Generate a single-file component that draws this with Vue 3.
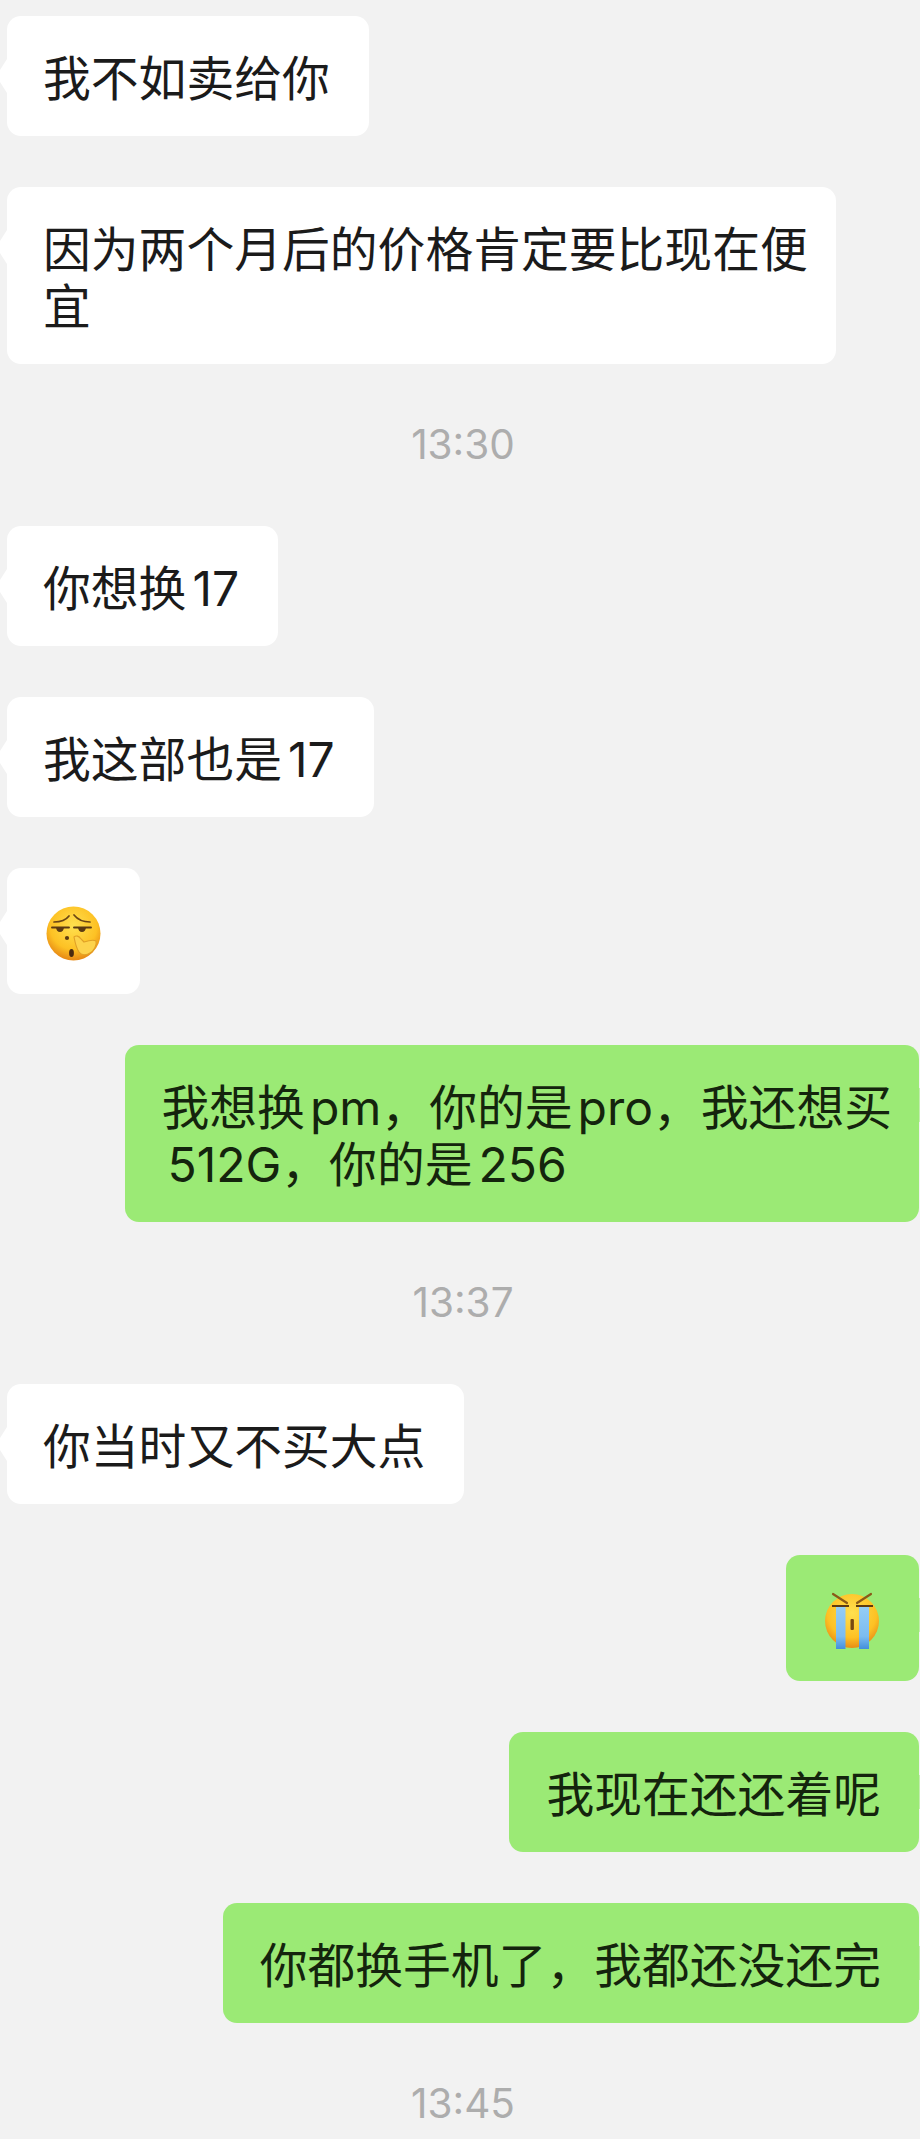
<script setup>
</script>

<template>
  <main class="chat">
    <div class="row"><div class="bubble in">我不如卖给你</div></div>
    <div class="row"><div class="bubble in wrap">因为两个月后的价格肯定要比现在便宜</div></div>
    <div class="time">13:30</div>
    <div class="row"><div class="bubble in">你想换<span class="lat">17</span></div></div>
    <div class="row"><div class="bubble in">我这部也是<span class="lat">17</span></div></div>
    <div class="row">
      <div class="bubble in emoji-bubble">
        <svg class="emoji" viewBox="0 0 56 56" role="img" aria-label="shushing face">
          <defs>
            <radialGradient id="faceA" cx="50%" cy="36%" r="62%">
              <stop offset="0" stop-color="#ffe04f" />
              <stop offset="0.7" stop-color="#fdc124" />
              <stop offset="1" stop-color="#e88c16" />
            </radialGradient>
          </defs>
          <circle cx="27.500" cy="27.500" r="27" fill="url(#faceA)" />
          <path d="M8 16c6 0 12-2 15-6M28 9c4 5 9 7 16 7" fill="none" stroke="#6b4514" stroke-width="1.700" stroke-linecap="round" />
          <path d="M6 21.500h17M28 21.500h17" fill="none" stroke="#5c3a12" stroke-width="1.900" stroke-linecap="round" />
          <path d="M10 21h8c0 3-1.800 5-4 5s-4-2-4-5zM32 21h8c0 3-1.800 5-4 5s-4-2-4-5z" fill="#5c3a12" />
          <circle cx="21" cy="32" r="2.100" fill="#5c3a12" />
          <ellipse cx="25.500" cy="47" rx="2.400" ry="4.100" fill="#4a2a10" />
          <path d="M28 31c2-2 5-1 7 2l3 3c3-1 9-3 12-1 1 4-2 10-6 12-4 3-9 2-11-1-3-4-4-10-5-15z" fill="#fdd34c" stroke="#e0a026" stroke-width="1.100" />
        </svg>
      </div>
    </div>
    <div class="row out"><div class="bubble green long">我想换<span class="lat tight">pm</span>，你的是<span class="lat tight">pro</span>，我还想买<br /><span class="indent"><span class="lat first">512G</span>，你的是<span class="lat">256</span></span></div></div>
    <div class="time">13:37</div>
    <div class="row"><div class="bubble in">你当时又不买大点</div></div>
    <div class="row out">
      <div class="bubble green emoji-bubble">
        <svg class="emoji tall" viewBox="0 0 56 58" role="img" aria-label="loudly crying face">
          <defs>
            <radialGradient id="faceB" cx="50%" cy="35%" r="65%">
              <stop offset="0" stop-color="#ffe04f" />
              <stop offset="0.7" stop-color="#fdc124" />
              <stop offset="1" stop-color="#e88c16" />
            </radialGradient>
            <linearGradient id="tear" x1="0" y1="0" x2="0" y2="1">
              <stop offset="0" stop-color="#94cdf5" />
              <stop offset="0.7" stop-color="#7cbcf0" />
              <stop offset="1" stop-color="#428fdc" />
            </linearGradient>
          </defs>
          <circle cx="27" cy="29" r="27" fill="url(#faceB)" />
          <path d="M8 2l14 9M46 2L32 11" fill="none" stroke="#8a5a18" stroke-width="2.200" stroke-linecap="round" />
          <path d="M7 14h17M31 14h17" fill="none" stroke="#5c3a12" stroke-width="1.900" />
          <rect x="11" y="15" width="9.500" height="42" fill="url(#tear)" />
          <rect x="34" y="15" width="10" height="42" fill="url(#tear)" />
          <rect x="25.500" y="27" width="3.400" height="11" rx="1" fill="#7a4a10" />
        </svg>
      </div>
    </div>
    <div class="row out"><div class="bubble green">我现在还还着呢</div></div>
    <div class="row out"><div class="bubble green">你都换手机了，我都还没还完</div></div>
    <div class="time last">13:45</div>
  </main>
</template>

<style>
html, body { background: #f2f2f2; }
</style>

<style scoped>
.chat {
  box-sizing: border-box;
  width: 920px;
  height: 2139px;
  overflow: hidden;
  padding: 16px 1px 0 7px;
  background: #f2f2f2;
  display: flex;
  flex-direction: column;
  gap: 51px;
  font-family: "Liberation Sans", "Noto Sans CJK SC", sans-serif;
}
.row { display: flex; }
.row.out { justify-content: flex-end; }
.bubble {
  position: relative;
  box-sizing: border-box;
  padding: 35px 39px 28px 36px;
  border-radius: 14px;
  font-size: 47.800px;
  line-height: 57px;
  color: #1b1b1b;
  background: #fff;
}
.bubble.wrap { width: 829px; padding-right: 24px; }
.bubble.in::before {
  content: "";
  position: absolute;
  left: -7px;
  top: 43px;
  width: 7px;
  height: 34px;
  background: #fff;
  clip-path: polygon(100% 0, 0 32%, 0 68%, 100% 100%);
}
.bubble.green { background: #9bea75; color: #14240d; padding-left: 37px; padding-right: 38px; }
.bubble.green.long { padding-right: 27px; }
.bubble.green::after {
  content: "";
  position: absolute;
  right: -1px;
  top: 43px;
  width: 1px;
  height: 34px;
  background: #c4edb0;
}
.lat {
  font-family: Inter, "Liberation Sans", sans-serif;
  font-size: 48px;
  line-height: 0;
  margin-left: 6px;
}
.lat.tight { margin-left: 5px; }
.lat.first { margin-left: 0; }
.indent { margin-left: 6px; }
.bubble.emoji-bubble {
  width: 133px;
  height: 126px;
  padding: 6px 0 0;
  display: flex;
  align-items: center;
  justify-content: center;
}
.emoji { width: 56px; height: 56px; display: block; }
.emoji.tall { height: 58px; }
.time {
  text-align: center;
  font-family: Inter, "Liberation Sans", sans-serif;
  font-size: 40.500px;
  line-height: 32px;
  color: #adadad;
  margin: 14px 0;
}
.time.last { margin-bottom: 0; }
</style>
